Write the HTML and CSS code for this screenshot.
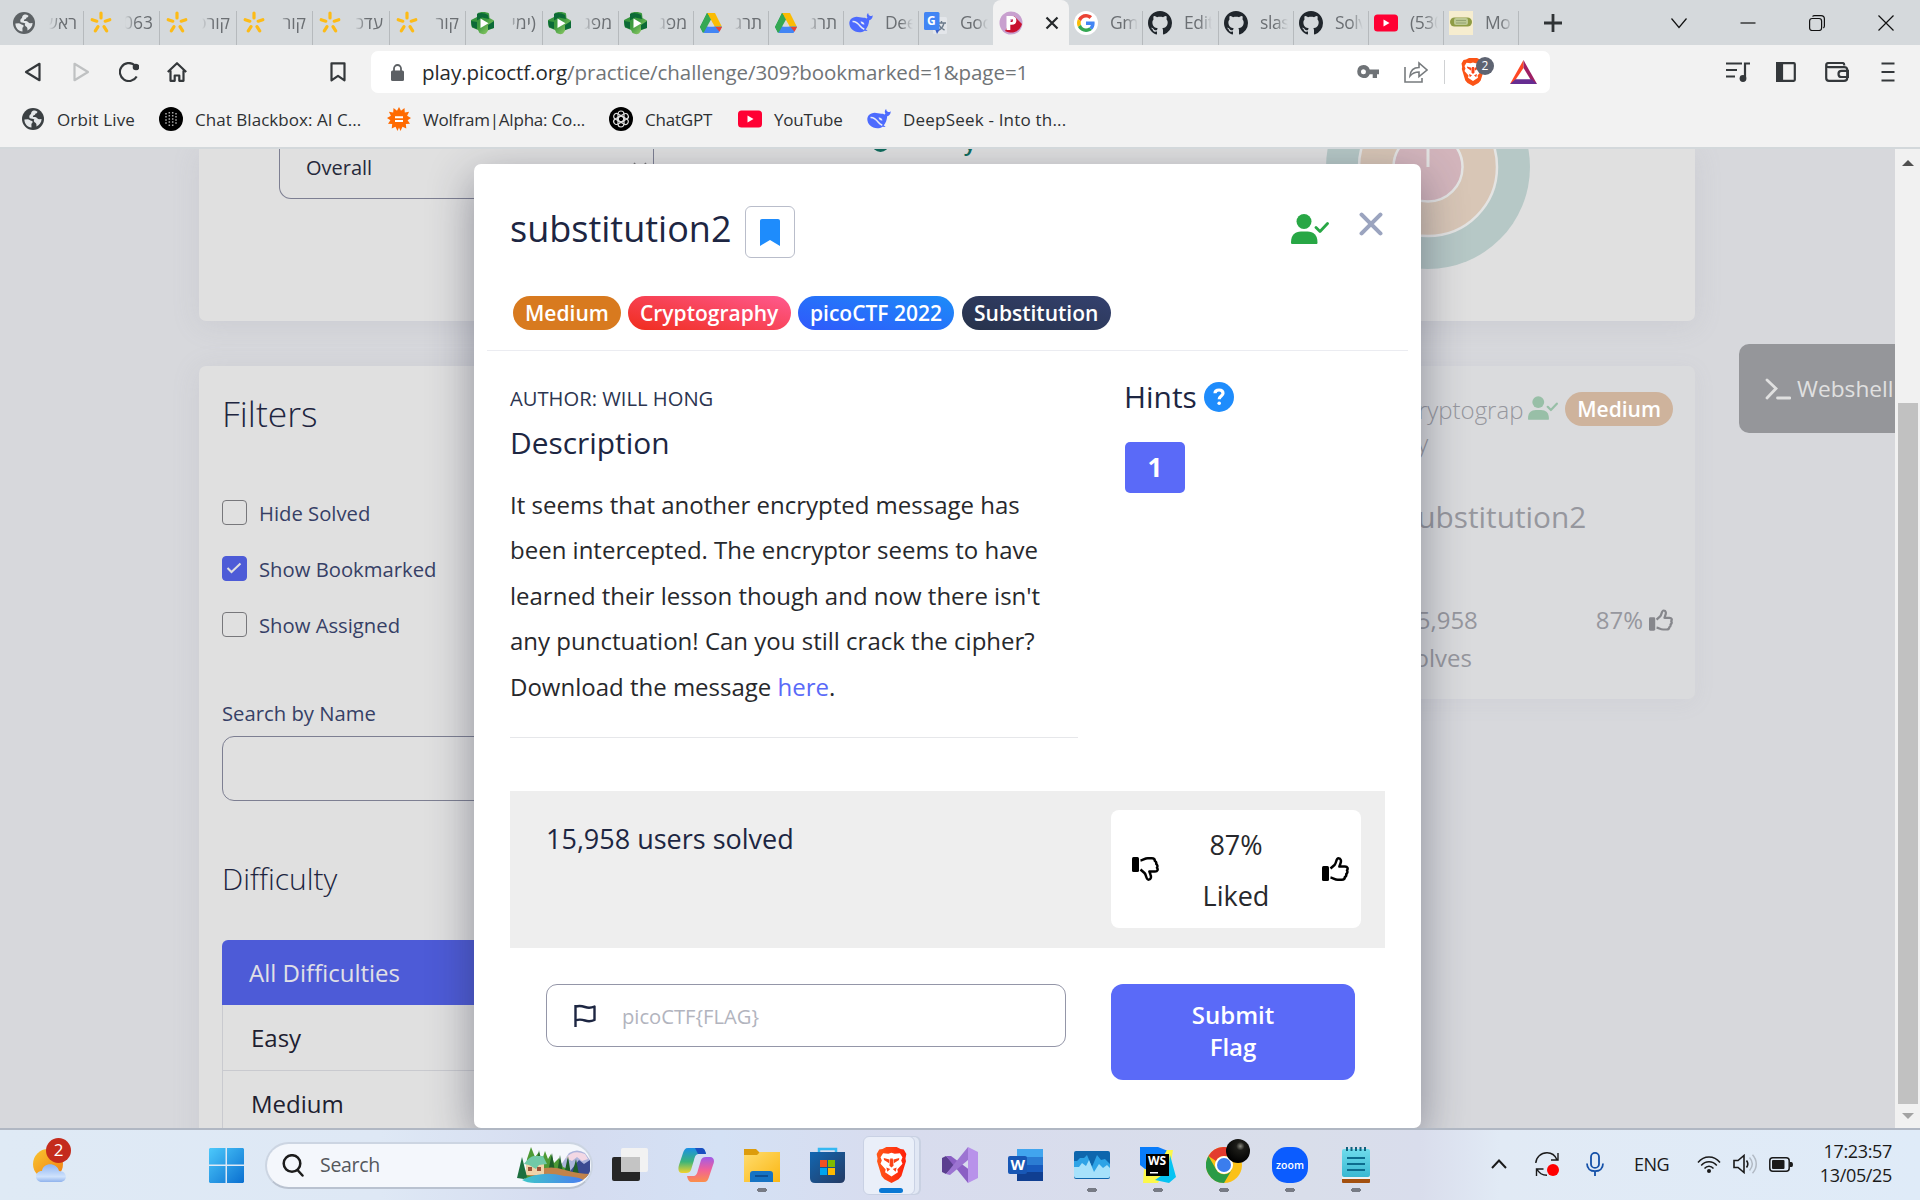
FILE: index.html
```html
<!DOCTYPE html>
<html lang="en">
<head>
<meta charset="utf-8">
<title>picoCTF - substitution2</title>
<link rel="stylesheet" href="styles.css">
</head>
<body>
<svg class="defs" aria-hidden="true">
  <defs>
    <linearGradient id="gGreen" x1="0" y1="0" x2="1" y2="1"><stop offset="0" stop-color="#2f8f3c"/><stop offset=".5" stop-color="#3e9b3f"/><stop offset="1" stop-color="#a6d872"/></linearGradient>
    <linearGradient id="gWin" x1="0" y1="0" x2="1" y2="1"><stop offset="0" stop-color="#4cc9fb"/><stop offset="1" stop-color="#0a6fd0"/></linearGradient>
    <linearGradient id="gSun" x1="0" y1="0" x2="1" y2="1"><stop offset="0" stop-color="#f9c62f"/><stop offset="1" stop-color="#f07c12"/></linearGradient>
    <linearGradient id="gCloud" x1="0" y1="0" x2="0" y2="1"><stop offset="0" stop-color="#8db4f2"/><stop offset=".7" stop-color="#cfe2fc"/><stop offset="1" stop-color="#8fb2ec"/></linearGradient>
    <linearGradient id="gCopA" x1="0" y1="0" x2="0" y2="1"><stop offset="0" stop-color="#1a8fe6"/><stop offset=".55" stop-color="#3cb47a"/><stop offset="1" stop-color="#f2d32b"/></linearGradient>
    <linearGradient id="gCopB" x1="0" y1="0" x2="0" y2="1"><stop offset="0" stop-color="#a05be8"/><stop offset=".5" stop-color="#f0609a"/><stop offset="1" stop-color="#fb8f4a"/></linearGradient>
    <linearGradient id="gFold" x1="0" y1="0" x2="1" y2="1"><stop offset="0" stop-color="#ffdc6e"/><stop offset="1" stop-color="#fbb713"/></linearGradient>
    <linearGradient id="gStore" x1="0" y1="0" x2="1" y2="1"><stop offset="0" stop-color="#1267b2"/><stop offset="1" stop-color="#243a63"/></linearGradient>
    <linearGradient id="gLion" x1="0" y1="0" x2="1" y2="0"><stop offset="0" stop-color="#ff5a1a"/><stop offset="1" stop-color="#ff1f0a"/></linearGradient>
    <radialGradient id="gBall" cx=".6" cy=".3" r=".7"><stop offset="0" stop-color="#8a8a80"/><stop offset=".25" stop-color="#1c1c18"/><stop offset="1" stop-color="#000"/></radialGradient>
    <linearGradient id="gNote" x1="0" y1="0" x2="0" y2="1"><stop offset="0" stop-color="#6fdcec"/><stop offset="1" stop-color="#3ab8d2"/></linearGradient>
    <linearGradient id="gLake" x1="0" y1="0" x2="1" y2="0"><stop offset="0" stop-color="#3fc7c9"/><stop offset="1" stop-color="#4a7df0"/></linearGradient>
    <symbol id="globe" viewBox="0 0 24 24"><circle cx="12" cy="12" r="11"/><path fill="#e4e7e9" d="M3.4 12.4 7 12.2c1.8.4 2.4 1.4 4.2 1.8.8.8.3 2.2-.8 2.8l.1 3.6C6.300 20 3.400 16.500 3.400 12.400zM12.500 3.500c1.200-.1 3 .4 4 1.200-.2 1.300-1.300 1.700-2.200 2.100.1 1.200-.9 1.600-2 1.800l-.4 1.500 2.300-.2c2 .3 2.300 2.200 4 2.400l2.400-.4c-.1 3.300-2.300 6.300-5.200 7.500.4-2.200-.2-3.400-1.500-4-1.200-.8-1.300-1.700-.6-2.900-1.200-1-3-.7-4.600-1.300-.9-2-.3-3.600 1.300-4.300.1-1.700.9-3 2.500-3.400z"/></symbol>
    <symbol id="star" viewBox="0 0 24 24"><path d="M12 2v5M3.200 8.700l4.600 1.500M20.800 8.700l-4.600 1.500M6.300 19.800l2.700-4.200M17.700 19.800 15 15.600" stroke="#fdbb16" stroke-width="3.200" stroke-linecap="round" fill="none"/></symbol>
    <symbol id="hex" viewBox="0 0 24 24"><path fill="url(#gGreen)" d="M6.500 2.500C8 .5 16 .5 18 2.500l.5 4.500L23 9.500v7.500l-5.500 2-2.500 3.500q-3 1.500-6.500-.5L7 19l-6-2.500Q0 14 0 11V9l6-3z"/><path fill="#0c6a37" d="M6 3c3-2 8-1 11 1l1 4-7-1.500-5 3zM0 10l6 1v7l-5-2zM17 14l6-4v7l-6 2z"/><path fill="#fff" d="m9.500 7.500 8 4.800-8 4.700z"/></symbol>
    <symbol id="drive" viewBox="0 0 24 22"><path fill="#0f9d58" d="M8 1h4l-6.500 13L4 21 1 15z"/><path fill="#188038" d="M8 1h4.200L9 8.500z"/><path fill="#fbbc04" d="M8 1h8l7 14h-7z"/><path fill="#4285f4" d="M5.500 14.500H23L19.500 21h-15z"/><path fill="#34a853" d="M8 1 1 15l3.500 6L12 7.500z"/><path fill="#d5d9dc" d="m12 8.500-3 6h6z"/><path fill="#ea4335" d="M16.500 15H23l-2.500 4.800z"/></symbol>
    <symbol id="whale" viewBox="0 0 24 20"><path fill="#4d6bfe" d="M23.600 2.200c-1 .9-2 1-2.800.6-1-.6-1.500-1.500-1.600-2.800-1.500 1-1.800 3.100-.8 4.600-.3.500-.6.900-.9 1-2-1.500-4.200-.4-6.600-1.300C8 3 4 3.600 1.700 6.200-.7 9.200.2 13.500 2.900 16.300c3.300 3.300 9 4 12.600 1.400l2.800.3c.4-.5-.6-1-1.600-1.500 2-2.300 3.200-5.400 3.500-9.200 2.100-.5 3.800-2.600 3.400-5.100z"/><path fill="none" stroke="#e6eaf8" stroke-width="1.500" d="M3.500 8.500c3.300-.2 6 2.300 7.800 4.800 1 1.400 2.300 2.300 4 3"/><path fill="#e6eaf8" d="M11.500 8.500c2-.3 3.500 1 4 2.800-1.500.7-3.500-.6-4-2.800z"/></symbol>
    <symbol id="github" viewBox="0 0 16 16"><path fill="#20262c" d="M8 0C3.580 0 0 3.580 0 8c0 3.540 2.290 6.530 5.470 7.590.4.070.55-.17.55-.38 0-.19-.01-.82-.01-1.490-2.010.37-2.530-.49-2.690-.94-.09-.23-.48-.94-.82-1.130-.28-.15-.68-.52-.01-.53.63-.01 1.080.58 1.230.82.72 1.210 1.870.87 2.330.66.07-.52.28-.87.51-1.070-1.780-.2-3.640-.89-3.640-3.950 0-.87.31-1.590.82-2.150-.08-.2-.36-1.020.08-2.120 0 0 .67-.21 2.200.82.64-.18 1.320-.27 2-.27s1.360.09 2 .27c1.530-1.040 2.200-.82 2.200-.82.44 1.100.16 1.920.08 2.120.51.56.82 1.270.82 2.150 0 3.070-1.870 3.750-3.650 3.950.29.25.54.73.54 1.480 0 1.070-.01 1.930-.01 2.200 0 .21.15.46.55.38A8.010 8.010 0 0 0 16 8c0-4.420-3.580-8-8-8z"/></symbol>
    <symbol id="youtube" viewBox="0 0 24 17"><rect width="24" height="17" rx="3.500" fill="#ff0033"/><path fill="#fff" d="m9.500 5 6 3.500-6 3.500z"/></symbol>
    <symbol id="lion" viewBox="0 0 24 28"><path d="M5 1.500 8 0h8l3 1.500L21.500 2 23.500 5.500 22.800 9l.4 2-3.500 11.500-2.200 2.500L12 28l-5.500-3-2.200-2.500L.8 11l.4-2L.5 5.500 2.500 2z"/><path fill="#fff" d="m12 4.500 2.500.8 4-.5 2 3.200-1 2.500 1 2.500-4 4.500.5 2.200L12 23l-5-3.300.5-2.200-4-4.500 1-2.500-1-2.500 2-3.200 4 .5z"/><path class="lion-cut" d="M6 8.500l4.500 1.200-.3 3-4-2.600zM18 8.500l-4.500 1.200.3 3 4-2.600zM11 9h2l.6 5.500L12 16l-1.600-1.500zM8 16l3 1.200-2.200 2zM16 16l-3 1.200 2.200 2z"/></symbol>
    <symbol id="person" viewBox="0 0 38 30"><circle cx="13" cy="7.500" r="7.500"/><path d="M0 28.500C0 21 4 17.500 10 17.500h6.500c6 0 10 3.500 10 11 0 1-.5 1.500-1.500 1.500H1.500C.5 30 0 29.500 0 28.500z"/><path fill="none" stroke="currentColor" stroke-width="2.800" stroke-linecap="round" stroke-linejoin="round" d="m25 13.500 4 4 7.500-8"/></symbol>
    <symbol id="thumb" viewBox="0 0 27 24"><rect y="9" width="7" height="15" rx="1.500"/><path fill="none" stroke="currentColor" stroke-width="2.500" stroke-linejoin="round" d="M8.500 11.500 12.500 8c2-2 1.500-6.700 4-6.700 2.700 0 2.800 3 2 5L17.400 9.500H23c2.700 0 3.200 2.300 2 3.800.8 1.300.3 3-.8 3.700.4 1.500-.2 2.600-1.400 3.200 0 1.800-1.200 2.500-3 2.500h-4c-3 0-4.500-1.700-7.300-2.200"/></symbol>
  </defs>
</svg>

<div class="desktop">
  <header class="browser">
    <div class="tabstrip">
      <div class="tabs">
        <div class="tab tab-first"><svg class="fav gray"><use href="#globe"/></svg><span class="tt rtl">ראשי</span></div>
        <div class="tab"><svg class="fav"><use href="#star"/></svg><span class="tt rtl">1063</span></div>
        <div class="tab"><svg class="fav"><use href="#star"/></svg><span class="tt rtl">קורס</span></div>
        <div class="tab"><svg class="fav"><use href="#star"/></svg><span class="tt rtl">קור</span></div>
        <div class="tab"><svg class="fav"><use href="#star"/></svg><span class="tt rtl">עדכון</span></div>
        <div class="tab"><svg class="fav"><use href="#star"/></svg><span class="tt rtl">קור</span></div>
        <div class="tab"><svg class="fav"><use href="#hex"/></svg><span class="tt rtl">(ימי</span></div>
        <div class="tab"><svg class="fav"><use href="#hex"/></svg><span class="tt rtl">מפגש</span></div>
        <div class="tab"><svg class="fav"><use href="#hex"/></svg><span class="tt rtl">מפגש</span></div>
        <div class="tab"><svg class="fav"><use href="#drive"/></svg><span class="tt rtl">תרגיל</span></div>
        <div class="tab"><svg class="fav"><use href="#drive"/></svg><span class="tt rtl">תרגיל</span></div>
        <div class="tab"><svg class="fav"><use href="#whale"/></svg><span class="tt">Deep</span></div>
        <div class="tab tab-plain"><svg class="fav" viewBox="0 0 24 24"><rect x="9" y="6" width="14" height="17" rx="1.500" fill="#e3e6ea"/><path d="M13 12h9M17.500 10v2M20 12c-1 4-3 6-5 7M15 14c1 2 3 4 5.500 5" stroke="#6c7b8b" stroke-width="1.400" fill="none"/><path fill="#3c5fc4" d="m11 18 5 0-3 5z"/><rect width="15.500" height="18" rx="1.500" y="1" fill="#4285f4"/><text x="3" y="14" class="g-text">G</text></svg><span class="tt">Goog</span></div>
        <div class="tab tab-active"><svg class="fav" viewBox="0 0 24 24"><circle cx="12" cy="12" r="11.500" fill="#c8a0cf"/><path fill="#c8102e" d="m6 20 9-15 8 8a11.500 11.500 0 0 1-17 7z"/><path fill="#fff" fill-rule="evenodd" d="M7.500 5h5.200c3 0 4.700 1.700 4.700 4.400s-1.800 4.400-4.700 4.400h-1.400V19H7.500zm3.800 3v2.900h1c1.100 0 1.600-.5 1.600-1.500s-.5-1.400-1.600-1.400z"/></svg><svg class="tab-x" viewBox="0 0 14 14"><path d="m1.500 1.500 11 11m0-11-11 11"/></svg></div>
        <div class="tab"><svg class="fav" viewBox="0 0 48 48"><circle cx="24" cy="24" r="24" fill="#fff"/><g transform="translate(6 6) scale(.75)"><path fill="#EA4335" d="M24 9.500c3.540 0 6.710 1.220 9.210 3.600l6.850-6.850C35.900 2.380 30.470 0 24 0 14.620 0 6.510 5.380 2.560 13.220l7.980 6.190C12.430 13.720 17.740 9.500 24 9.500z"/><path fill="#4285F4" d="M46.980 24.550c0-1.570-.15-3.090-.38-4.550H24v9.020h12.940c-.58 2.960-2.260 5.480-4.780 7.180l7.730 6c4.510-4.180 7.090-10.360 7.090-17.650z"/><path fill="#FBBC05" d="M10.530 28.590A14.500 14.500 0 0 1 9.770 24c0-1.600.27-3.140.76-4.590l-7.980-6.190A23.900 23.900 0 0 0 0 24c0 3.880.92 7.540 2.560 10.780z"/><path fill="#34A853" d="M24 48c6.480 0 11.930-2.130 15.890-5.810l-7.730-6c-2.150 1.450-4.920 2.300-8.160 2.300-6.260 0-11.570-4.220-13.470-9.910l-7.980 6.190C6.510 42.620 14.620 48 24 48z"/></g></svg><span class="tt">Gma</span></div>
        <div class="tab"><svg class="fav"><use href="#github"/></svg><span class="tt">Edit</span></div>
        <div class="tab"><svg class="fav"><use href="#github"/></svg><span class="tt">slash</span></div>
        <div class="tab"><svg class="fav"><use href="#github"/></svg><span class="tt">Solve</span></div>
        <div class="tab"><svg class="fav"><use href="#youtube"/></svg><span class="tt">(530)</span></div>
        <div class="tab"><svg class="fav" viewBox="0 0 24 24"><rect width="24" height="24" fill="#f6edcf"/><rect x="1" y="6.500" width="22" height="9" rx="4.500" fill="#8f9c45"/><rect x="5" y="7" width="14" height="7" rx="2" fill="#bcc893"/><path d="M7 9.500h10M7 12h10" stroke="#8c9a6a" stroke-width=".8"/></svg><span class="tt">Mo</span></div>
      </div>
      <svg class="plus" viewBox="0 0 20 20"><path d="M10 1v18M1 10h18"/></svg>
      <div class="winbtns">
        <svg viewBox="0 0 16 16"><path d="m.5 3.500 7.500 9 7.500-9"/></svg>
        <svg viewBox="0 0 16 16"><path d="M.5 8h15"/></svg>
        <svg viewBox="0 0 16 16"><rect x=".6" y="3.500" width="12" height="12" rx="2.500"/><path d="M3.500 1.500C4 .8 4.700.6 5.500.6H12c2 0 3.400 1.400 3.400 3.400v7c0 .8-.4 1.500-1 2"/></svg>
        <svg viewBox="0 0 16 16"><path d="m.5.5 15 15m0-15-15 15"/></svg>
      </div>
    </div>

    <div class="toolbar">
      <div class="nav">
        <svg viewBox="0 0 20 20"><path d="M16.500 1.800v16.400L3 10z"/></svg>
        <svg class="off" viewBox="0 0 20 20"><path d="M3.500 1.800v16.400L17 10z"/></svg>
        <svg viewBox="0 0 20 20"><path d="M17.700 14.500A9 9 0 1 1 15.500 3"/><circle cx="17" cy="5" r="3.300" fill="#34383b" stroke="none"/></svg>
        <svg viewBox="0 0 20 20"><path d="M.8 10 10 1.200 19.200 10M3.500 8.500v10.300h4.200v-5.300h4.600v5.300h4.200V8.500"/></svg>
      </div>
      <svg class="savemark" viewBox="0 0 16 20"><path d="M1.500 1.300h13v17L8 13.800l-6.500 4.500z"/></svg>
      <div class="urlbox">
        <svg class="lock" viewBox="0 0 13 17"><rect y="6.500" width="13" height="10.500" rx="1.500" fill="#5c6064"/><path d="M3 7V4.500a3.500 3.500 0 0 1 7 0V7" fill="none" stroke="#5c6064" stroke-width="1.800"/></svg>
        <span class="url"><b>play.picoctf.org</b>/practice/challenge/309?bookmarked=1&amp;page=1</span>
        <div class="urlicons">
          <svg class="key" viewBox="0 0 22 14"><path fill="#6f7377" fill-rule="evenodd" d="M6.500 0a6.500 6.500 0 0 1 6.200 4.600H22v4.600h-2V13h-4.300V9.200h-3A6.500 6.500 0 1 1 6.500 0zm0 4.300a2.500 2.500 0 1 0 0 5 2.500 2.500 0 0 0 0-5z"/></svg>
          <svg class="share" viewBox="0 0 24 22"><path d="M1 6v15h17v-4M6 15c.5-6 4-8.500 9-8.500V2l8 7-8 6.500v-4.500c-4 0-6.500 1-9 4z"/></svg>
          <i class="vbar"></i>
          <div class="shield"><svg viewBox="0 0 24 28"><use href="#lion"/></svg><em>2</em></div>
          <svg class="bat" viewBox="0 0 27 24"><path fill="#ff4724" d="M13.500 0v8L4 22l-4 2z"/><path fill="#9e1f63" d="M13.500 0 27 24l-5-2-8.500-14z"/><path fill="#662d91" d="m0 24 5.500-4.700h16L27 24z"/></svg>
        </div>
      </div>
      <div class="tools">
        <svg viewBox="0 0 24 20"><path d="M0 1.500h16M0 8h11M0 14.500h9M19 16V1.500h5"/><circle cx="17" cy="16.500" r="3.400" fill="#34383b" stroke="none"/></svg>
        <svg class="t-side" viewBox="0 0 20 20"><rect x="1.200" y="1.200" width="17.600" height="17.600" rx="1"/><path fill="#34383b" d="M1 1h5v18H1z"/></svg>
        <svg viewBox="0 0 24 20"><path d="M1.200 3v13c0 1.800.9 2.800 2.800 2.800h15c1.800 0 3.200-1 3.200-2.800V7.500c0-1.600-1.300-2.300-3-2.300H4C2.300 5.200 1.200 4.500 1.200 3 1.200 1.600 2.200 1 4 1h13.500c1.300 0 1.800 1 1.800 2.500M23 8.800h-6.500c-4 0-4 6.200 0 6.200H23z"/></svg>
        <svg class="t-menu" viewBox="0 0 14 20"><path d="M.5 1.500h13M.5 10h13M.5 18.500h13" /></svg>
      </div>
    </div>

    <nav class="bookmarks">
      <a class="bm b1"><svg class="fav dark"><use href="#globe"/></svg>Orbit Live</a>
      <a class="bm b2"><svg class="fav" viewBox="0 0 24 24"><circle cx="12" cy="12" r="12"/><path d="M7 6v12M10.300 5v14M13.700 5v14M17 6v12" stroke="#aaa" stroke-width="1.500" stroke-dasharray="1.500 1.600"/></svg>Chat Blackbox: AI C...</a>
      <a class="bm b3"><svg class="fav" viewBox="0 0 24 24"><path fill="#ff6a00" d="m12 0 2 3.800L17.500 1l.3 4.400 4.300-.7-2 4L24 11l-3.400 2.300 2.400 3.500-4.200.3.500 4.400-3.800-1.800L13.500 24 12 20.500 10.500 24l-2-4.300-3.800 1.800.5-4.400-4.200-.3 2.400-3.500L0 11l3.900-2.300-2-4 4.300.7L6.500 1 10 3.800z"/><path d="M8 10.300h8M8 14h8" stroke="#fff" stroke-width="2"/></svg>Wolfram|Alpha: Co...</a>
      <a class="bm b4"><svg class="fav" viewBox="0 0 24 24"><circle cx="12" cy="12" r="12"/><g fill="none" stroke="#ddd" stroke-width="1.200"><rect id="pt" x="9" y="4" width="6" height="11" rx="3"/><use href="#pt" transform="rotate(60 12 12)"/><use href="#pt" transform="rotate(120 12 12)"/><use href="#pt" transform="rotate(180 12 12)"/><use href="#pt" transform="rotate(240 12 12)"/><use href="#pt" transform="rotate(300 12 12)"/></g></svg>ChatGPT</a>
      <a class="bm b5"><svg class="fav"><use href="#youtube"/></svg>YouTube</a>
      <a class="bm b6"><svg class="fav"><use href="#whale"/></svg>DeepSeek - Into th...</a>
    </nav>
  </header>

  <div class="viewport">
    <main class="page">
      <section class="card summary">
        <div class="select"><span>Overall</span><svg viewBox="0 0 14 9"><path d="m1 1 6 6.500L13 1"/></svg></div>
        <div class="legend"><i></i><span>y</span></div>
        <svg class="chart" viewBox="-102 -18 204 121"><circle r="102" fill="#b6c8c6"/><circle r="69" fill="#d8c6b6" stroke="#e4e4e3" stroke-width="2.500"/><circle r="34.500" fill="#d3b5bc" stroke="#e4e4e3" stroke-width="2.500"/><path d="M0-20V0" stroke="#e4e4e3" stroke-width="3"/></svg>
      </section>
      <div class="columns">
        <aside class="card filters">
          <h2>Filters</h2>
          <label class="check"><i></i>Hide Solved</label>
          <label class="check"><i class="on"><svg viewBox="0 0 16 12"><path d="m1.500 6 4 4L14.500 1.500"/></svg></i>Show Bookmarked</label>
          <label class="check"><i></i>Show Assigned</label>
          <p class="name-label">Search by Name</p>
          <div class="name-input"></div>
          <h3>Difficulty</h3>
          <ul class="levels">
            <li class="sel">All Difficulties</li>
            <li>Easy</li>
            <li>Medium</li>
          </ul>
        </aside>
        <article class="card result">
          <div class="r-top">
            <p class="r-cat">Cryptograp<br>hy</p>
            <svg class="r-person"><use href="#person"/></svg>
            <span class="pill p-faded">Medium</span>
          </div>
          <h4>substitution2</h4>
          <div class="r-bottom"><p>15,958<br>solves</p><span>87%</span><svg class="r-thumb"><use href="#thumb"/></svg></div>
        </article>
      </div>
      <div class="webshell"><svg viewBox="0 0 26 22"><path d="m2 2 9 8.500L2 20M12.500 20H25"/></svg>Webshell</div>

      <div class="modal">
        <div class="m-head">
          <h1>substitution2</h1>
          <button class="mark"><svg viewBox="0 0 20 27"><path d="M2 0h16c1.200 0 2 .8 2 2v25l-10-6-10 6V2C0 .8.8 0 2 0z"/></svg></button>
          <svg class="m-person"><use href="#person"/></svg>
          <svg class="m-close" viewBox="0 0 23 23"><path d="m2.500 2.500 18 18m0-18-18 18"/></svg>
        </div>
        <div class="pills">
          <span class="pill p-orange">Medium</span><span class="pill p-red">Cryptography</span><span class="pill p-blue">picoCTF 2022</span><span class="pill p-navy">Substitution</span>
        </div>
        <hr class="m-rule">
        <div class="m-body">
          <div class="m-left">
            <p class="author">AUTHOR: WILL HONG</p>
            <h5>Description</h5>
            <p class="desc">It seems that another encrypted message has<br>been intercepted. The encryptor seems to have<br>learned their lesson though and now there isn't<br>any punctuation! Can you still crack the cipher?<br>Download the message <a>here</a>.</p>
          </div>
          <div class="m-right">
            <h5 class="hints">Hints <i><svg viewBox="0 0 12 18"><path d="M2 5.200C2 3 3.700 2 6 2s4 1.200 4 3.200C10 8 6.200 8 6.200 11.300"/><circle cx="6.200" cy="15.300" r="1.800"/></svg></i></h5>
            <button class="hint">1</button>
          </div>
        </div>
        <div class="solved">
          <p>15,958 users solved</p>
          <div class="liked"><svg class="down"><use href="#thumb"/></svg><span>87%<br>Liked</span><svg class="up"><use href="#thumb"/></svg></div>
        </div>
        <div class="submit">
          <div class="flag"><svg viewBox="0 0 22 24"><path d="M1.500 1v22M1.500 3c3.500-2 6.500-1 9.500 0s6 1 9.500-.5V16c-3.500 1.500-6.500 1.500-9.500.5s-6-1.500-9.500 0"/></svg>picoCTF{FLAG}</div>
          <button class="send">Submit<br>Flag</button>
        </div>
      </div>
    </main>
    <div class="scroll"><i class="s-up"></i><i class="thumb"></i><i class="s-down"></i></div>
  </div>

  <footer class="taskbar">
    <div class="weather"><svg viewBox="0 0 34 34"><circle cx="15" cy="16" r="15" fill="url(#gSun)"/><path fill="url(#gCloud)" d="M9 34c-8 0-8-11 0-11 1-9 15-9 17 0 9 0 9 11 1 11z"/></svg><em>2</em></div>
    <svg class="winlogo" viewBox="0 0 35 35"><path fill="url(#gWin)" d="M1 0h15.500v16.500H0V1zM18 0h16l1 1v15.500H18zM0 18h16.500v17H1l-1-1zM18 18h17v16l-1 1H18z"/></svg>
    <div class="search">
      <svg class="mag" viewBox="0 0 22 23"><circle cx="10" cy="9.500" r="8.300"/><path d="m15.500 16 5 5.500"/></svg><span>Search</span>
      <svg class="scene" viewBox="0 0 74 36"><path fill="#aeb5dc" d="m40 24 12-18q8-5 16 0l5 7v13z"/><path fill="#f3d8e4" d="M49 11q7-9 19-4l3 5-6 2-5-4-5 4z"/><path fill="#3b4a91" d="m50 28 12-15 5 4 6-4v18z"/><path fill="#4d9a35" d="M10 12l4-12 4 10 4-5 3 8 3-9 3 8 3-5 3 9 5-5 4 9 5 2 3 10H8z"/><path fill="#1f5f2a" d="m22 3 3 20h-6zM35 6l3 19h-7zM43 8l3 18h-6zM51 9l3 19h-7zM59 12l3 16h-7z"/><path fill="#c2834a" d="M8 28q22-12 40-5 14 4 26 4L66 34 20 30z"/><path fill="#f0d3a9" d="M9 16h18v12H9z"/><path fill="#71c9a8" d="M7 17q6-8 10-8h9l4 8-8 1-3 4-7-4z"/><path fill="#9c5238" d="M11 20h4v4h-4zM20 20h4v4h-4z"/><path fill="url(#gLake)" d="M5 33q20-10 42-4 18 1 20 5-4 2-10 2H18q-8 0-13-3z"/><path fill="#1c6f3f" d="m5 10 5 20-3 2-7-1z"/></svg>
    </div>
    <div class="apps">
      <div class="app"><svg viewBox="0 0 36 36"><rect y="10" width="28" height="24" rx="2" fill="#262626"/><rect x="9" y="1" width="27" height="24" rx="2" fill="#f2f2f2"/><path fill="#c4c4c4" d="M9 10h19v15H9z"/></svg></div>
      <div class="app"><svg viewBox="0 0 36 36"><path fill="url(#gCopA)" d="M10 1h13c3 0 4 2 5 6H21c-3 0-4 2-5 6l-3 10c-1 2-2 3-5 3H4c-4 0-4-5-3-8l4-12c1-3 2-5 5-5z"/><path fill="#1b4fc0" d="M17 1h6c3 0 4 2 5 6h-8z"/><path fill="url(#gCopB)" d="M26 35H14c-3 0-4-2-5-6h6c3 0 4-2 5-6l3-10c1-2 2-3 5-3h4c4 0 5 4 3 8l-4 12c-1 3-2 5-5 5z"/></svg></div>
      <div class="app run"><svg viewBox="0 0 36 36"><path fill="#dd9c0c" d="M0 2h12l4 4v5H0z"/><path fill="url(#gFold)" d="M0 8h13l3-3h20v30H0z"/><path fill="#1573c4" d="M6 35v-8c0-2 1-3 3-3h17c2 0 3 1 3 3v8z"/><path d="M11 29h13" stroke="#0c4f94" stroke-width="2"/></svg></div>
      <div class="app"><svg viewBox="0 0 36 36"><path d="M9 8V2h17v6" fill="none" stroke="#35b8f2" stroke-width="2.500"/><path fill="url(#gStore)" d="M0 5h35v26q0 5-5 5H5q-5 0-5-5z"/><path fill="#f25022" d="M10 13h7v7h-7z"/><path fill="#7fba00" d="M18 13h7v7h-7z"/><path fill="#00a4ef" d="M10 21h7v7h-7z"/><path fill="#ffb900" d="M18 21h7v7h-7z"/></svg></div>
      <div class="app cur"><svg class="tb-lion" viewBox="0 0 24 28" preserveAspectRatio="none"><use href="#lion" width="24" height="28"/></svg></div>
      <div class="app"><svg viewBox="0 0 36 36"><path fill="#5b3f8f" d="m0 11 4-2 9 9-9 9-4-2z"/><path fill="#8b5fc4" d="m4 9 22 27 3-12L9 9z"/><path fill="#9c74d2" d="M4 27 26 0v13L8 28z"/><path fill="#b892ea" d="m26 0 10 5v26l-10 5z"/></svg></div>
      <div class="app"><svg viewBox="0 0 36 36"><path fill="#41a5ee" d="M9 2h26v9H9z"/><path fill="#2b7cd3" d="M9 10h26v9H9z"/><path fill="#185abd" d="M9 18h26v8H9z"/><path fill="#103f91" d="M9 25h26v9H9z"/><rect y="9" width="19" height="18" rx="2" fill="#1857b5"/><text x="2.500" y="23" class="w-text">W</text></svg></div>
      <div class="app run"><svg viewBox="0 0 36 36"><rect y="4" width="36" height="28" rx="2" fill="#0e66ad"/><path fill="#2ea3e6" d="m0 14 3 0 3-3 4 0 3-3 5 12 5-12 4 5 4-1 5 5v8H0z"/><path fill="#a6e1fb" d="m0 20 5 0 3-4 4 3 3-6 5 12 5-8 4 4 4-3 3 3v8q0 2-2 2H2q-2 0-2-2z"/></svg></div>
      <div class="app run"><svg viewBox="0 0 36 36"><path fill="#087cfa" d="M0 0h18l10 4v28L5 22 0 18z"/><path fill="#fcf84a" d="M27 3h6l-2 12H20zM4 22l18 6-4 8H3z"/><path fill="#07c3f2" d="m30 8 6 22-7 6-14-3 13-9z"/><path d="M6 7h23v22H6z"/><text x="8" y="18" class="ws-text">WS</text><path fill="#fff" d="M10 25h8v1.500h-8z"/></svg></div>
      <div class="app run"><svg viewBox="0 0 36 36"><circle cx="18" cy="18" r="18" fill="#fbc116"/><path fill="#e33b2e" d="M2.400 9A18 18 0 0 1 33.600 9H18a9 9 0 0 0-8 5z"/><path fill="#2a9b47" d="M2.400 9A18 18 0 0 0 18 36l8-13.500a9 9 0 0 1-15.800 0z"/><circle cx="18" cy="18" r="9" fill="#fff"/><circle cx="18" cy="18" r="7" fill="#3b7ded"/></svg><svg class="ball" viewBox="0 0 24 24"><circle cx="12" cy="12" r="12" fill="url(#gBall)"/></svg></div>
      <div class="app run"><svg viewBox="0 0 36 36"><rect width="36" height="36" rx="15" fill="#0b5cff"/><text x="18" y="21.500" text-anchor="middle" class="z-text">zoom</text></svg></div>
      <div class="app run"><svg viewBox="0 0 36 36"><rect x="4" y="30" width="28" height="6" rx="1" fill="#a3500f"/><path fill="#f2f2f2" d="M4 27h28v5H4z"/><rect x="4" y="2" width="28" height="28" rx="2" fill="url(#gNote)"/><path d="M9 0v4M13.500 0v4M18 0v4M22.500 0v4M27 0v4" stroke="#11607c" stroke-width="2"/><path d="M9 11h18M9 17h18M9 23h18" stroke="#0c6c8e" stroke-width="2"/></svg></div>
    </div>
    <div class="tray">
      <svg class="t1" viewBox="0 0 16 10"><path d="m1 9 7-7.500L15 9" stroke-width="2"/></svg>
      <svg class="t2" viewBox="0 0 24 24"><path d="M.8 11C1 5 6 .8 12 .8c4 0 8 2.200 10 7M23 1v7h-7M12 23.200c-4-.1-8-2-10-6M1.500 24v-7h7" stroke-width="1.400"/><circle cx="18" cy="18" r="6" fill="red" stroke="none"/></svg>
      <svg class="t3" viewBox="0 0 18 24"><rect x="5" y=".9" width="8" height="15" rx="4"/><path d="M1 11.500c0 5 3.500 7.700 8 7.700s8-2.700 8-7.700M9 19v5"/></svg>
      <span class="lang">ENG</span>
      <svg class="t4" viewBox="0 0 24 17"><path d="M1 6.500C7-.7 17-.7 23 6.500M4.200 9.500c4.300-5 11.300-5 15.600 0M7.500 12.500c2.500-3 6.500-3 9 0" stroke-width="1.500"/><circle cx="12" cy="15" r="2" fill="#1a1a1a" stroke="none"/></svg>
      <svg class="t5" viewBox="0 0 24 20"><path d="M1 6.500h4l6-5v17l-6-5H1z" stroke-width="1.600"/><path d="M13.500 6.500c1.500 2 1.500 5 0 7" stroke-width="1.600"/><path d="M16.500 3.500c3.500 4 3.500 9 0 13M19.500.8c5 5.500 5 13 0 18.400" stroke="#b2bac4" stroke-width="1.500"/></svg>
      <svg class="t6" viewBox="0 0 24 15"><rect x=".8" y=".8" width="19.400" height="13.400" rx="3" stroke-width="1.500"/><rect x="3" y="3" width="12.500" height="9" rx="1" fill="#1a1a1a" stroke="none"/><path fill="#1a1a1a" stroke="none" d="M21 5h1.500q1.500 0 1.500 2.500T22.500 10H21z"/></svg>
      <div class="clock">17:23:57<br>13/05/25</div>
    </div>
  </footer>
</div>
</body>
</html>
```
FILE: styles.css
```css
* { box-sizing: border-box; }
html, body { margin: 0; padding: 0; }
body { font-family: "Open Sans", "Noto Sans", sans-serif; background: #d7d8dc; overflow: hidden; }
h1, h2, h3, h4, h5, p, ul { margin: 0; padding: 0; font-weight: 400; list-style: none; }
button { font-family: inherit; padding: 0; border: 0; }
svg { display: block; flex: none; }
i, em { font-style: normal; }
.defs { position: absolute; width: 0; height: 0; }
.desktop { width: 1920px; height: 1200px; display: flex; flex-direction: column; }

/* browser chrome */
.browser { height: 149px; background: #f2f2f2; border-bottom: 2px solid #d3d8db; }
.tabstrip { height: 45px; background: #d5d9dc; display: flex; align-items: center; }
.tabs { display: grid; height: 45px; grid-template-columns: 84px 76px 77px 76px 77px 76px 77px 76px 75px 75px 75px 75px 74px 76px 74px 76px 75px 75px 75px 75px; }
.tab { display: flex; align-items: center; padding-left: 5px; position: relative; overflow: hidden; background: linear-gradient(#b6babd, #b6babd) right bottom / 1px 34px no-repeat; }
.tab-first { padding-left: 12px; }
.tab-plain { background: none; }
.tab-active { background: #f2f2f2; border-radius: 8px 8px 0 0; padding: 0 10px 0 6px; justify-content: space-between; }
.fav { width: 24px; height: 24px; }
.gray { fill: #5d6265; }
.dark { fill: #3b4043; }
.tt { margin-left: 12px; width: 28px; overflow: hidden; white-space: nowrap; font-size: 17.500px; letter-spacing: -.4px; line-height: 24px; padding-bottom: 2px; color: #6b6f73; -webkit-mask-image: linear-gradient(90deg, #000 55%, transparent); mask-image: linear-gradient(90deg, #000 55%, transparent); }
.rtl { direction: rtl; margin-left: auto; margin-right: 7px; letter-spacing: 0; -webkit-mask-image: linear-gradient(270deg, #000 60%, transparent); mask-image: linear-gradient(270deg, #000 60%, transparent); }
.tab-x { width: 14px; height: 14px; fill: none; stroke: #26292b; stroke-width: 2.200; }
.g-text { font: 700 12px "Open Sans", sans-serif; fill: #fff; }
.plus { width: 20px; height: 20px; margin-left: 24px; fill: none; stroke: #2f3335; stroke-width: 2.800; }
.winbtns { display: flex; gap: 53px; margin-left: 108px; }
.winbtns svg { width: 16px; height: 16px; fill: none; stroke: #111; stroke-width: 1.200; }
.toolbar { height: 54px; display: flex; align-items: center; }
.nav { display: flex; gap: 28px; padding-left: 23px; }
.nav svg { width: 20px; height: 20px; fill: none; stroke: #34383b; stroke-width: 2.200; stroke-linejoin: round; }
.nav .off { stroke: #bfc1c2; }
.savemark { width: 16px; height: 20px; margin-left: 143px; fill: none; stroke: #34383b; stroke-width: 2.200; stroke-linejoin: round; }
.urlbox { margin-left: 25px; width: 1179px; height: 42px; border-radius: 7px; background: #fff; display: flex; align-items: center; padding-left: 20px; }
.lock { width: 13px; height: 17px; }
.url { margin-left: 18px; font-size: 20.500px; letter-spacing: -.05px; line-height: 30px; color: #707477; white-space: nowrap; }
.url b { font-weight: 400; color: #26292b; }
.urlicons { display: flex; align-items: center; margin-left: auto; padding-right: 13px; }
.key { width: 22px; height: 14px; }
.share { width: 24px; height: 22px; margin-left: 25px; fill: none; stroke: #777b7e; stroke-width: 1.600; }
.vbar { width: 1.500px; height: 24px; background: #cfd1d3; margin-left: 16px; }
.shield { position: relative; margin-left: 16px; width: 24px; height: 28px; fill: #fb5417; }
.lion-cut { fill: #fb4417; }
.shield svg { width: 24px; height: 28px; }
.shield em { position: absolute; left: 15px; top: -1px; width: 18px; height: 18px; border-radius: 9px; background: #5e6472; color: #fff; font-size: 12px; line-height: 18px; text-align: center; }
.bat { width: 27px; height: 24px; margin-left: 25px; }
.tools { display: flex; align-items: center; margin-left: 176px; }
.tools svg { width: 24px; height: 20px; fill: none; stroke: #34383b; stroke-width: 2.200; margin-right: 26px; }
.tools .t-side { width: 20px; margin-right: 29px; }
.tools .t-menu { width: 14px; margin: 0 0 0 6px; }
.bookmarks { display: flex; padding: 8px 0 0 21px; }
.bm { display: flex; align-items: center; gap: 12px; height: 24px; font-size: 17px; color: #2d3032; white-space: nowrap; letter-spacing: -.2px; }
.b1 { width: 138px; letter-spacing: .15px; } .b2 { width: 228px; letter-spacing: .05px; } .b3 { width: 222px; } .b4 { width: 129px; } .b5 { width: 129px; } .b6 { letter-spacing: .2px; }

/* page behind the dialog */
.viewport { height: 979px; display: flex; }
.page { position: relative; width: 1895px; height: 979px; overflow: hidden; background: #d7d8dc; }
.card { background: #e0e0e0; border-radius: 7px; box-shadow: 0 4px 28px rgba(140, 140, 160, .16); }
.summary { margin-left: 199px; width: 1496px; height: 172px; border-radius: 0 0 7px 7px; display: flex; align-items: flex-start; }
.select { margin-left: 80px; width: 375px; height: 50px; border: 1.500px solid #7d7f92; border-top: 0; border-radius: 0 0 12px 12px; display: flex; justify-content: space-between; padding: 5px 6px 0 26px; font-size: 20px; line-height: 28px; color: #26293a; }
.select svg { width: 14px; height: 9px; margin-top: 8px; fill: none; stroke: #777; stroke-width: 1.500; }
.legend { display: flex; margin-left: 218px; height: 10px; width: 110px; overflow: hidden; color: #0f6b5c; }
.legend i { width: 17px; height: 17px; border-radius: 9px; background: #0f6b5c; margin-top: -14px; }
.legend span { margin-left: 75px; font-size: 22px; line-height: 24px; margin-top: -19px; font-weight: 600; }
.chart { width: 204px; height: 121px; margin-left: auto; margin-right: 165px; }
.columns { display: flex; margin: 45px 0 0 199px; width: 1496px; justify-content: space-between; align-items: flex-start; }
.filters { width: 400px; height: 900px; padding: 17px 23px; color: #20253f; }
.filters h2 { font-size: 35.500px; font-weight: 300; line-height: 60px; margin-bottom: 57px; }
.check { display: flex; align-items: center; height: 25px; margin-bottom: 31px; font-size: 20.250px; line-height: 24px; color: #363f66; gap: 12px; }
.check i { width: 25px; height: 25px; border: 1.500px solid #77777b; border-radius: 4px; }
.check .on { background: #4d5bd7; border-color: #4d5bd7; padding: 5px 3px; }
.on svg { width: 16px; height: 12px; fill: none; stroke: #e0e0e0; stroke-width: 2; }
.name-label { font-size: 20.250px; line-height: 28px; margin-top: 62px; color: #363f66; }
.name-input { height: 65px; margin-top: 9px; border: 1.500px solid #7d7f92; border-radius: 12px; }
.filters h3 { font-size: 30px; font-weight: 300; line-height: 40px; margin: 58px 0 41px; }
.levels { font-size: 24px; color: #1e2030; }
.levels li { height: 66px; line-height: 65px; padding-left: 28px; border: 1px solid #c9cacf; border-top: 0; }
.levels .sel { background: #4d5bd7; color: #e0e0e6; height: 65px; border: 0; border-radius: 6px 6px 0 0; padding-left: 27px; }
.result { width: 330px; height: 333px; background: #dadbdd; padding: 26px 22px 0 38px; color: #96979e; box-shadow: 0 4px 22px rgba(140, 140, 160, .08); }
.r-top { display: flex; height: 34px; }
.r-cat { font-size: 24px; font-weight: 300; line-height: 33px; padding-top: 1px; white-space: nowrap; }
.r-person { width: 30px; height: 24px; margin: 4px 7px 0 auto; fill: #98bfa7; color: #98bfa7; }
.p-faded { background: #ceb39c; color: #dcdcde; }
.result h4 { font-size: 29.800px; line-height: 40px; margin-top: 71px; }
.r-bottom { display: flex; align-items: flex-start; margin-top: 65px; font-size: 24px; line-height: 38px; }
.r-bottom p { margin-right: auto; margin-top: -1px; }
.r-bottom span { margin-top: -1px; }
.r-thumb { width: 24px; height: 22px; margin: 7px 0 0 6px; fill: #86878c; color: #86878c; }
.webshell { position: absolute; left: 1739px; top: 195px; width: 170px; height: 89px; background: #95969a; border-radius: 10px; display: flex; align-items: center; gap: 6px; padding-left: 26px; font-size: 22.700px; color: #e0e0e0; }
.webshell svg { width: 26px; height: 22px; fill: none; stroke: #e0e0e0; stroke-width: 2.800; stroke-linecap: round; }
.scroll { width: 25px; background: #f1f1f1; display: flex; flex-direction: column; align-items: center; }
.s-up { border: 6px solid transparent; border-bottom-color: #505050; border-top: 0; margin-top: 11px; }
.thumb { width: 20px; height: 701px; background: #c1c1c1; margin-top: 237px; }
.s-down { border: 6px solid transparent; border-top-color: #a3a3a3; border-bottom: 0; margin-top: 9px; }

/* challenge dialog */
.modal { position: absolute; left: 474px; top: 15px; width: 947px; height: 964px; padding: 38px 36px 0; background: #fff; border-radius: 7px; box-shadow: 0 14px 45px rgba(40, 42, 65, .45); color: #1d2642; }
.m-head { display: flex; height: 56px; }
.m-head h1 { font-size: 36px; line-height: 54px; width: 235px; }
.mark { width: 50px; height: 52px; margin-top: 4px; border: 1.500px solid #b9bdca; border-radius: 6px; background: #fff; display: grid; place-items: center; }
.mark svg { width: 20px; height: 27px; fill: #1e8cfc; }
.m-person { width: 38px; height: 30px; margin: 12px 30px 0 auto; fill: #28a745; color: #28a745; }
.m-close { width: 24px; height: 24px; margin: 10px 2px 0 0; fill: none; stroke: #9ba4bf; stroke-width: 4; stroke-linecap: round; }
.pills { display: flex; gap: 7px; margin: 38px 0 0 3px; }
.pill { height: 34px; border-radius: 17px; padding: 0 12px; font-size: 21px; font-weight: 600; line-height: 34px; color: #fff; white-space: nowrap; }
.p-orange { background: #d87a1f; width: 108px; }
.p-red { background: linear-gradient(15deg, #f02c1c, #ff5a90); width: 163px; }
.p-blue { background: linear-gradient(15deg, #3058fb, #1c8cf8); width: 156px; }
.p-navy { background: linear-gradient(15deg, #27324a, #34416f); width: 149px; margin-left: 1px; }
.m-rule { border: 0; height: 1px; background: #ebecf1; margin: 20px -23px 0; }
.m-body { display: flex; gap: 46px; }
.m-left { width: 568px; padding-top: 33px; height: 387px; border-bottom: 1.500px solid #e6e7ea; }
.author { font-size: 20.200px; line-height: 28px; color: #2c3550; }
.m-body h5 { font-size: 29.900px; line-height: 40px; margin-top: 11px; }
.desc { font-size: 24px; line-height: 45.600px; margin-top: 18.600px; color: #27282c; white-space: nowrap; }
.desc a { color: #5a6af8; }
.m-right { padding-top: 15px; }
.m-body .hints { display: flex; align-items: center; gap: 7px; }
.hints i { width: 30px; height: 30px; border-radius: 15px; background: #1e8cfc; display: grid; place-items: center; }
.hints svg { width: 12px; height: 18px; fill: none; stroke: #fff; stroke-width: 3.200; }
.hints circle { fill: #fff; stroke: none; }
.hint { display: block; width: 60px; height: 51px; margin: 25px 0 0 1px; padding-bottom: 2px; border-radius: 5px; background: #5a6af8; color: #fff; font-size: 26px; font-weight: 700; }
.solved { margin-top: 53px; height: 157px; background: #eee; padding: 19px 24px 0 36px; display: flex; justify-content: space-between; font-size: 27px; }
.solved p { line-height: 38px; margin-top: 10px; }
.liked { width: 250px; height: 118px; background: #fff; border-radius: 8px; padding: 9px 12px 0 21px; display: flex; justify-content: space-between; line-height: 51px; text-align: center; color: #27282c; }
.liked span { flex: 1; margin-left: -9px; }
.liked svg { width: 27px; height: 24px; margin-top: 38px; fill: #000; color: #000; }
.liked .down { transform: scaleY(-1); }
.submit { display: flex; align-items: flex-start; gap: 45px; margin: 36px 0 0 36px; }
.flag { width: 520px; height: 63px; border: 1.500px solid #9496a8; border-radius: 11px; display: flex; align-items: center; gap: 26px; padding-left: 27px; font-size: 20.200px; color: #b2b4be; }
.flag svg { width: 22px; height: 24px; fill: none; stroke: #1d2642; stroke-width: 2.400; stroke-linejoin: round; }
.send { width: 244px; height: 96px; padding-bottom: 2px; border-radius: 12px; background: #5a6af8; color: #fff; font-size: 24px; font-weight: 600; line-height: 32px; }

/* taskbar */
.taskbar { height: 72px; border-top: 2px solid #b0b7c3; background: linear-gradient(90deg, #dfeaf5 0, #dee8f5 380px, #d5dcf0 570px, #d4e1f5 720px, #d8dcee 900px, #d9deea 1300px, #d9ddec 1420px, #e1eaf5 1500px, #dfebf8 1920px); display: flex; align-items: center; position: relative; color: #1a1a1a; }
.weather { position: relative; width: 34px; height: 34px; margin-left: 33px; }
.weather svg { width: 34px; height: 34px; }
.weather em { position: absolute; left: 13px; top: -10px; width: 25px; height: 25px; border-radius: 13px; background: #c42b1c; color: #fff; font-size: 17px; line-height: 24px; text-align: center; }
.winlogo { width: 35px; height: 35px; margin-left: 142px; }
.search { margin-left: 21px; width: 328px; height: 47px; border-radius: 24px; background: #f4f7fc; border: 2px solid #ccd5e2; border-bottom-color: #b9c2d0; display: flex; align-items: center; padding-left: 15px; font-size: 19.500px; letter-spacing: -.3px; color: #55585c; }
.search span { padding-bottom: 2px; }
.mag { width: 22px; height: 23px; margin-right: 16px; fill: none; stroke: #1c1c1c; stroke-width: 2.500; stroke-linecap: round; }
.scene { width: 74px; height: 36px; margin-left: auto; margin-right: 0; border-radius: 0 18px 18px 0; }
.apps { display: flex; margin-left: 4px; }
.app { position: relative; width: 66px; height: 70px; display: flex; align-items: center; justify-content: center; }
.app > svg { width: 36px; height: 36px; }
.run { background: radial-gradient(circle 2px at 2px 2px, #777b85 99%, transparent), linear-gradient(#777b85, #777b85), radial-gradient(circle 2px at 2px 2px, #777b85 99%, transparent); background-size: 4px 4px, 5px 4px, 4px 4px; background-position: 28px 58px, 31px 58px, 34px 58px; background-repeat: no-repeat; }
.cur::before { content: ""; position: absolute; left: 2px; top: 6px; width: 50px; height: 57px; border-radius: 6px; background: #eaeff9; border: 1px solid #c9d1e4; box-shadow: 5px 0 0 -1px #e1e7f4, 6px 0 0 0 #c9d1e2; }
.cur::after { content: ""; position: absolute; left: 18px; top: 58px; width: 24px; height: 5px; border-radius: 3px; background: #0a78d4; }
.cur .tb-lion { position: relative; width: 31px; left: -3px; fill: url(#gLion); }
.app .ball { position: absolute; left: 35px; top: 9px; width: 24px; height: 24px; }
.w-text { font: 700 15px "Open Sans", sans-serif; fill: #fff; }
.ws-text { font: 700 12px "Open Sans", sans-serif; fill: #fff; }
.z-text { font: 600 10.500px "Open Sans", sans-serif; fill: #fff; }
.tray { display: flex; align-items: center; margin-left: auto; padding: 0 28px 2px 0; height: 70px; }
.tray svg { fill: none; stroke: #1a1a1a; }
.t1 { width: 16px; height: 10px; margin-right: 28px; }
.t2 { width: 24px; height: 24px; margin-right: 27px; }
.tray .t3 { width: 18px; height: 24px; margin-right: 30px; stroke: #1450a8; stroke-width: 1.800; }
.lang { width: 63px; font-size: 18px; letter-spacing: -.5px; }
.t4 { width: 24px; height: 17px; margin-right: 12px; }
.t5 { width: 24px; height: 20px; margin-right: 12px; }
.t6 { width: 24px; height: 15px; }
.clock { width: 99px; padding-bottom: 2px; text-align: right; font-size: 18px; letter-spacing: -.35px; line-height: 24px; }
```
